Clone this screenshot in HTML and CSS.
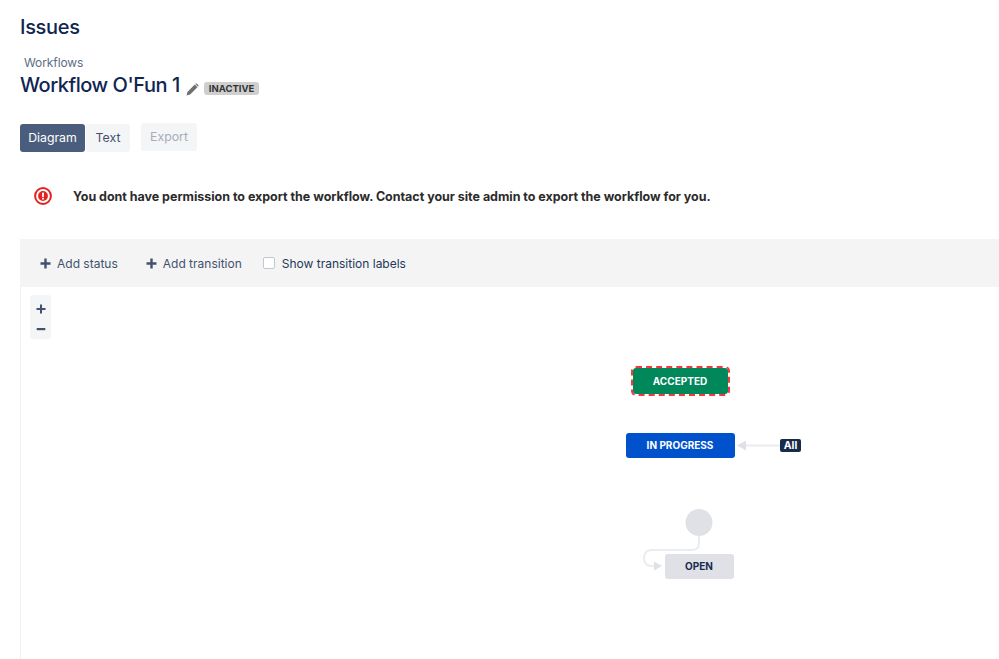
FILE: index.html
```html
<!DOCTYPE html>
<html lang="en">
<head>
  <meta charset="UTF-8">
  <meta name="viewport" content="width=device-width, initial-scale=1.0">
  <title>Workflow O'Fun 1</title>
  <link rel="stylesheet" href="styles.css">
</head>
<body>
  <div class="page">
    <h1 class="project-title">Issues</h1>
    <a class="breadcrumb">Workflows</a>
    <div class="workflow-head">
      <h2 class="workflow-title">Workflow O'Fun 1</h2>
      <svg class="edit-icon" width="13" height="13" viewBox="0 0 14 14">
        <path d="M0.6 13.4 L1.5 9.6 L9.4 1.7 L12.3 4.6 L4.4 12.5 Z" fill="#707070"/>
        <path d="M10.2 0.9 Q11 0.2 11.8 0.9 L13.1 2.2 Q13.8 3 13.1 3.8 L12.9 4 L10 1.1 Z" fill="#707070"/>
      </svg>
      <span class="lozenge">INACTIVE</span>
    </div>

    <div class="view-tabs">
      <button class="btn btn-selected">Diagram</button>
      <button class="btn btn-text">Text</button>
      <button class="btn btn-disabled">Export</button>
    </div>

    <div class="message">
      <svg class="message-icon" width="18" height="18" viewBox="0 0 18 18">
        <circle cx="9" cy="9" r="7.9" fill="none" stroke="#e5221f" stroke-width="2"/>
        <circle cx="9" cy="9" r="4.9" fill="#e5221f"/>
        <rect x="8.1" y="5.6" width="1.8" height="4.4" fill="#fff"/>
        <rect x="8.1" y="10.8" width="1.8" height="1.7" fill="#fff"/>
      </svg>
      <p>You dont have permission to export the workflow. Contact your site admin to export the workflow for you.</p>
    </div>

    <div class="designer">
      <div class="toolbar">
        <a class="tool tool-add">
          <svg width="11" height="11" viewBox="0 0 11 11"><path d="M4.3 0.5h2.4v3.8h3.8v2.4H6.7v3.8H4.3V6.7H0.5V4.3h3.8z" fill="#42526e"/></svg>
          Add status
        </a>
        <a class="tool tool-add">
          <svg width="11" height="11" viewBox="0 0 11 11"><path d="M4.3 0.5h2.4v3.8h3.8v2.4H6.7v3.8H4.3V6.7H0.5V4.3h3.8z" fill="#42526e"/></svg>
          Add transition
        </a>
        <label class="tool tool-labels"><span class="checkbox"></span>Show transition labels</label>
      </div>

      <div class="canvas">
        <div class="zoom-control">
          <svg width="10" height="10" viewBox="0 0 10 10"><path d="M4 0.5h2v3.5h3.5v2H6v3.5H4V6H0.5V4H4z" fill="#42526e"/></svg>
          <svg width="10" height="10" viewBox="0 0 10 10"><rect x="0.7" y="4" width="8.6" height="2.2" fill="#42526e"/></svg>
        </div>

        <svg class="edges" width="978" height="372" viewBox="0 0 978 372">
          <path d="M759 158.500H725" stroke="#ebecf0" stroke-width="2" fill="none"/>
          <path d="M716 158.500L725 153.500V163.500Z" fill="#dfe1e6"/>
          <path d="M678 245V256Q678 263 671 263H631Q623 263 623 271V271Q623 279 631 279H634" stroke="#ebecf0" stroke-width="2" fill="none"/>
          <path d="M641 279L633 274.500V283.500Z" fill="#dfe1e6"/>
          <circle cx="678" cy="235.500" r="13.500" fill="#dfe1e6"/>
        </svg>

        <div class="node node-accepted">ACCEPTED</div>
        <div class="node node-progress">IN PROGRESS</div>
        <div class="node node-open">OPEN</div>
        <span class="all-label">All</span>
      </div>
    </div>
  </div>
</body>
</html>
```

FILE: styles.css
```css
html, body {
  margin: 0;
  padding: 0;
  background: #fff;
}
body {
  font-family: Inter, "Liberation Sans", sans-serif;
  color: #172b4d;
  overflow: hidden;
}
.page {
  height: 659px;
  padding: 14px 0 0 20px;
  box-sizing: border-box;
  display: flex;
  flex-direction: column;
}
.project-title {
  margin: 0;
  font-size: 20px;
  line-height: 26px;
  font-weight: 500;
  letter-spacing: -0.3px;
  color: #102552;
}
.breadcrumb {
  display: block;
  margin: 15px 0 0 4px;
  font-size: 12px;
  line-height: 16px;
  letter-spacing: -0.1px;
  color: #5e6c84;
}
.workflow-head {
  display: flex;
  align-items: center;
  height: 28px;
}
.workflow-title {
  margin: 0;
  font-size: 20px;
  line-height: 28px;
  font-weight: 500;
  letter-spacing: -0.45px;
  color: #102552;
}
.edit-icon {
  margin: 8px 5px 0 6px;
}
.lozenge {
  margin-top: 6px;
  padding: 0 5px;
  height: 13px;
  line-height: 13px;
  border-radius: 3px;
  background: #cfcfcf;
  color: #333;
  font-size: 9.500px;
  font-weight: 700;
}

.view-tabs {
  display: flex;
  margin-top: 25px;
}
.btn {
  border: 0;
  border-radius: 3px;
  height: 28px;
  padding: 0 0 2px;
  font-family: inherit;
  font-size: 12.300px;
  background: #f4f5f7;
  color: #42526e;
}
.btn-selected {
  width: 65px;
  background: #4b5d7c;
  color: #fff;
}
.btn-text {
  width: 44px;
  margin-left: 1px;
}
.btn-disabled {
  width: 56px;
  margin: -1px 0 0 11px;
  color: #a5adba;
}

.message {
  display: flex;
  align-items: center;
  margin: 34px 0 0 14px;
  height: 20px;
}
.message-icon {
  flex: none;
}
.message p {
  margin: 0 0 0 21px;
  font-size: 12.500px;
  font-weight: 700;
  letter-spacing: -0.03px;
  color: #2b2b2b;
  white-space: nowrap;
}

.designer {
  flex: 1;
  margin-top: 33px;
  display: flex;
  flex-direction: column;
}
.toolbar {
  height: 48px;
  flex: none;
  background: #f4f4f5;
  display: flex;
  align-items: center;
  padding-left: 20px;
  font-size: 12px;
}
.tool {
  display: flex;
  align-items: center;
}
.tool-add {
  color: #42526e;
  gap: 6px;
  margin-right: 28px;
}
.tool-labels {
  margin-left: -7px;
  color: #253858;
}
.checkbox {
  width: 10px;
  height: 10px;
  margin-right: 7px;
  border: 1px solid #c1c7d0;
  border-radius: 2px;
  background: #fff;
}
.canvas {
  flex: 1;
  position: relative;
  border-left: 1px solid #f0f0f0;
}
.zoom-control {
  position: absolute;
  left: 9px;
  top: 8px;
  width: 21px;
  height: 44px;
  box-sizing: border-box;
  padding-top: 9px;
  background: #f4f5f7;
  border-radius: 3px;
  display: flex;
  flex-direction: column;
  align-items: center;
  gap: 10px;
}
.edges {
  position: absolute;
  left: 0;
  top: 0;
}
.node {
  position: absolute;
  display: flex;
  align-items: center;
  justify-content: center;
  border-radius: 3px;
  font-size: 10px;
  font-weight: 700;
  padding-right: 1px;
  box-sizing: border-box;
}
.node-accepted {
  left: 612px;
  top: 81px;
  width: 95px;
  height: 26px;
  background: #00875a;
  color: #fff;
  outline: 2px dashed #ee3b3b;
  outline-offset: 0;
}
.node-progress {
  left: 605px;
  top: 146px;
  width: 109px;
  height: 25px;
  padding-bottom: 1px;
  background: #0052cc;
  color: #fff;
}
.node-open {
  left: 644px;
  top: 267px;
  width: 69px;
  height: 25px;
  padding-bottom: 1px;
  background: #dfe1e6;
  color: #172b4d;
}
.all-label {
  position: absolute;
  left: 759px;
  top: 152px;
  width: 21px;
  height: 13px;
  line-height: 13px;
  text-align: center;
  border-radius: 2px;
  background: #172b4d;
  color: #fff;
  font-size: 10.500px;
  font-weight: 700;
}
```
